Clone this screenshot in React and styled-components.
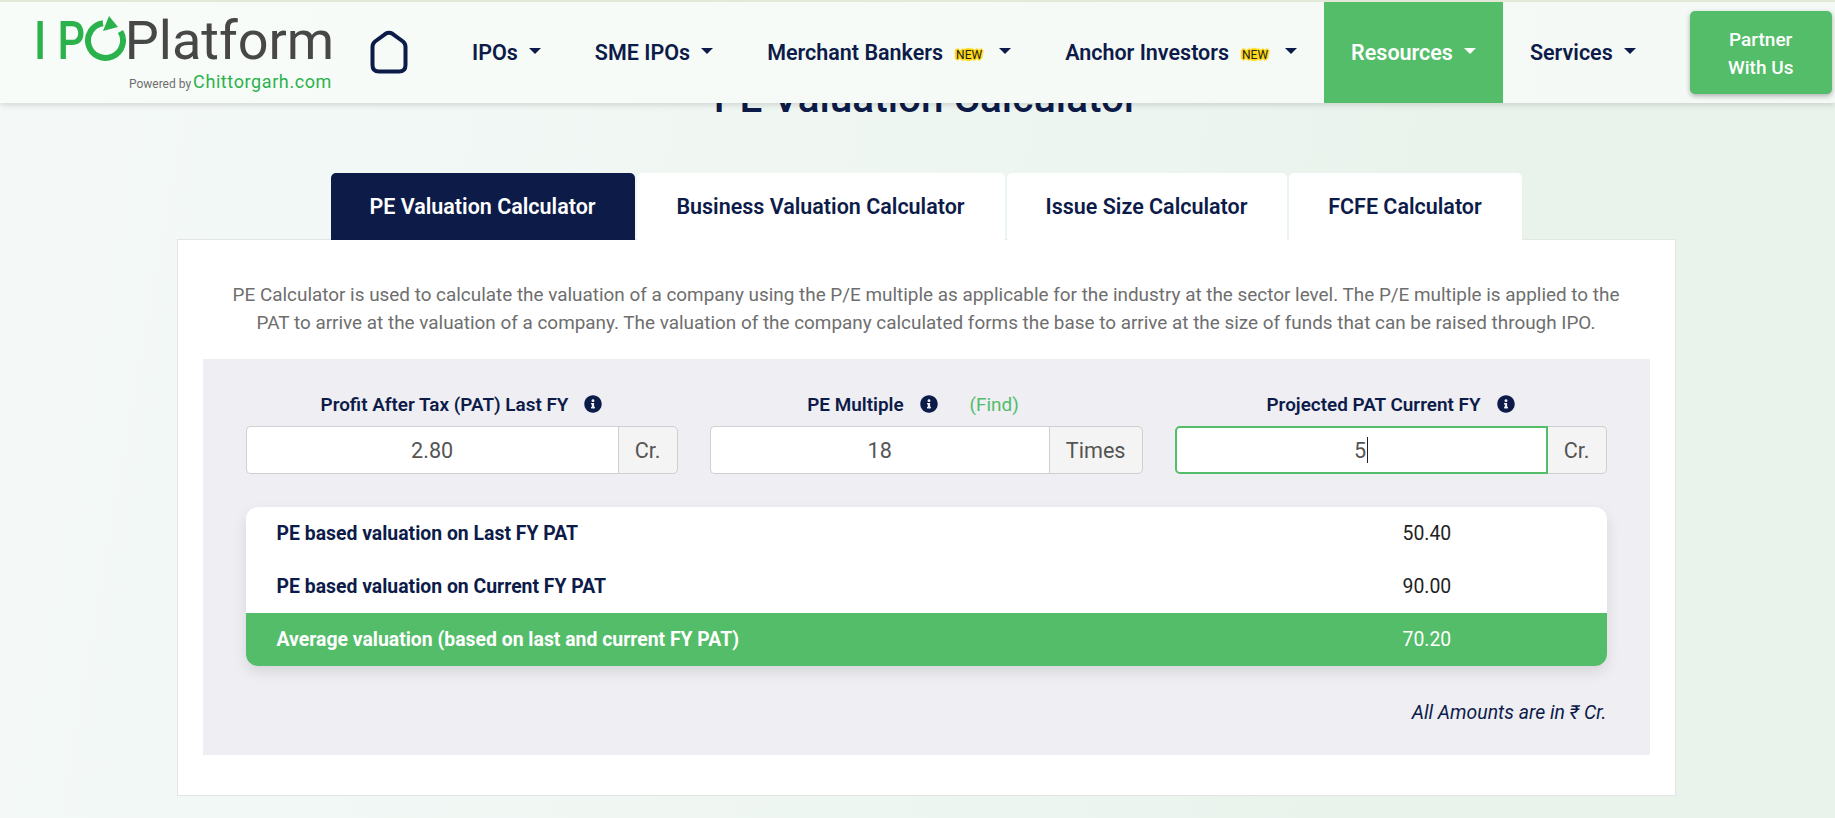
import React from 'react';
import styled, { createGlobalStyle } from 'styled-components';
import { FaInfoCircle } from 'react-icons/fa';

const navy = '#0d1b49';
const green = '#53bd69';
const logoGreen = '#2bb24c';

const GlobalStyle = createGlobalStyle`
  html, body {
    margin: 0;
    height: 818px;
    overflow: hidden;
  }
  body {
    font-family: Roboto, "Liberation Sans", sans-serif;
    color: ${navy};
  }
  * {
    box-sizing: border-box;
  }
`;

const Page = styled.div`
  position: relative;
  height: 818px;
  overflow: hidden;
  background: linear-gradient(100deg, #f4f9f7 0%, #f0f7f3 40%, #e9f3ec 75%);
`;

const Header = styled.header`
  position: absolute;
  top: 0;
  left: 0;
  right: 0;
  height: 103px;
  display: flex;
  align-items: stretch;
  border-top: 2px solid #e4e8d9;
  background: linear-gradient(90deg, #f8fcf9, #f4f9f6);
  box-shadow: 0 2px 6px rgba(0, 0, 0, 0.14);
`;

const LogoLink = styled.a`
  flex: 0 0 370px;
  padding: 7px 0 0 34px;
  display: flex;
  flex-direction: column;
`;

const LogoMain = styled.div`
  display: flex;
  align-items: flex-start;
  height: 63px;
  font-size: 54px;
  line-height: 64px;
`;

const LogoGreen = styled.span`
  display: inline-block;
  color: ${logoGreen};
  font-weight: 500;
  letter-spacing: 14px;
  transform: scaleX(0.8);
  transform-origin: left center;
`;

const LogoDark = styled.span`
  color: #474747;
  font-weight: 400;
`;

const LogoSub = styled.div`
  display: flex;
  justify-content: flex-end;
  align-items: baseline;
  gap: 2px;
  width: 298px;
  line-height: 20px;
`;

const Powered = styled.span`
  font-size: 12px;
  color: #6d6d6d;
`;

const Chittorgarh = styled.span`
  font-size: 18px;
  color: ${logoGreen};
  letter-spacing: 0.6px;
`;

const Ring = styled.svg`
  flex: 0 0 43px;
  margin: 7px -2px 0 -28px;
`;

const HomeLink = styled.a`
  flex: 0 0 75px;
  display: flex;
  align-items: center;
  padding-bottom: 1px;
`;

const NavItem = styled.a`
  display: flex;
  align-items: center;
  padding: 0 27px;
  font-size: 21.5px;
  font-weight: 600;
  white-space: nowrap;
  color: ${p => (p.$active ? '#fff' : navy)};
  background: ${p => (p.$active ? green : 'transparent')};
`;

const Caret = styled.i`
  display: inline-block;
  margin-left: ${p => p.$gap || 11}px;
  margin-bottom: 3px;
  border-top: 6px solid currentColor;
  border-left: 6px solid transparent;
  border-right: 6px solid transparent;
`;

const NewBadge = styled.span`
  margin-left: 11px;
  margin-top: 5px;
  padding: 0 2px;
  font-size: 12px;
  font-weight: 400;
  line-height: 13px;
  color: #222;
  text-shadow: 1px 0 #ffd713, -1px 0 #ffd713, 0 1px #ffd713, 0 -1px #ffd713, 1px 1px #ffd713, -1px -1px #ffd713,
    1px -1px #ffd713, -1px 1px #ffd713, 2px 0 1px #ffd713, -2px 0 1px #ffd713, 0 2px 1px #ffd713, 0 -2px 1px #ffd713;
`;

const PartnerButton = styled.a`
  align-self: flex-start;
  flex: 0 0 142px;
  height: 83px;
  margin: 9px 0 0 27px;
  padding-top: 2px;
  display: flex;
  align-items: center;
  justify-content: center;
  text-align: center;
  border-radius: 5px;
  background: ${green};
  color: #fff;
  font-size: 19px;
  font-weight: 500;
  line-height: 28px;
  box-shadow: 0 2px 5px rgba(0, 0, 0, 0.3);
`;

const Main = styled.main`
  display: flex;
  flex-direction: column;
  align-items: center;
  padding: 74px 0 0 17px;
`;

const Title = styled.h1`
  margin: 0 0 50px;
  font-size: 40.5px;
  font-weight: 500;
  line-height: 49px;
`;

const Tabs = styled.div`
  display: flex;
  gap: 2px;
  height: 67px;
  margin-bottom: -1px;
  position: relative;
`;

const Tab = styled.a`
  display: flex;
  align-items: center;
  justify-content: center;
  width: ${p => p.$width}px;
  padding-bottom: 1px;
  border-radius: 5px 5px 0 0;
  font-size: 21.5px;
  font-weight: 600;
  background: ${p => (p.$active ? navy : '#fff')};
  color: ${p => (p.$active ? '#fff' : navy)};
`;

const Card = styled.section`
  width: 1499px;
  padding: 41px 25px 40px;
  background: #fff;
  border: 1px solid #e3e6e4;
`;

const Intro = styled.p`
  margin: 0 0 22px;
  padding: 0 20px;
  text-align: center;
  font-size: 18.9px;
  line-height: 28px;
  color: #6e6e6e;
`;

const Panel = styled.div`
  padding: 34px 43px 0;
  height: 396px;
  background: #eeeef3;
`;

const Fields = styled.div`
  display: grid;
  grid-template-columns: 432px 433px 432px;
  gap: 32px;
`;

const Label = styled.div`
  display: flex;
  align-items: center;
  justify-content: center;
  height: 22px;
  margin-bottom: 11px;
  padding-right: ${p => (p.$shifted ? 26 : 0)}px;
  font-size: 18.9px;
  font-weight: 600;
  white-space: nowrap;

  svg {
    margin-left: 16px;
    font-size: 18px;
  }
`;

const FindLink = styled.a`
  margin-left: 32px;
  font-weight: 400;
  color: ${green};
`;

const InputGroup = styled.div`
  display: flex;
  height: 48px;
`;

const InputBox = styled.div`
  flex: 1 1 auto;
  display: flex;
  align-items: center;
  justify-content: center;
  background: #fff;
  border: ${p => (p.$focus ? `2px solid ${green}` : '1px solid #cfcfcf')};
  border-right-width: ${p => (p.$focus ? 2 : 0)}px;
  border-radius: 5px 0 0 5px;
  font-size: 21.6px;
  color: #555;
`;

const TextCursor = styled.i`
  width: 1px;
  height: 26px;
  margin-left: 1px;
  background: #222;
`;

const Addon = styled.div`
  display: flex;
  align-items: center;
  padding: 0 16px;
  background: #f4f4f4;
  border: 1px solid #cfcfcf;
  border-left-width: ${p => (p.$noLeft ? 0 : 1)}px;
  border-radius: 0 5px 5px 0;
  font-size: 21.6px;
  color: #555;
`;

const Results = styled.div`
  margin-top: 33px;
  background: #fff;
  border-radius: 12px;
  overflow: hidden;
  box-shadow: 0 6px 14px rgba(0, 0, 0, 0.1);
`;

const Row = styled.div`
  display: grid;
  grid-template-columns: 1126px 1fr;
  align-items: center;
  height: 53px;
  padding-left: 31px;
  font-size: 19.4px;
  color: ${p => (p.$total ? '#fff' : '#222')};
  background: ${p => (p.$total ? green : 'transparent')};
`;

const RowLabel = styled.div`
  font-weight: 700;
  color: ${p => (p.$total ? '#fff' : navy)};
`;

const Note = styled.div`
  margin-top: 35px;
  text-align: right;
  font-size: 19.4px;
  font-style: italic;
  line-height: 24px;
`;

const HomeIcon = () => (
  <svg width="38" height="44" viewBox="0 0 38 44" fill="none">
    <path
      d="M15.5 3.8 Q19 1.6 22.5 3.8 L33 11.5 Q35.5 13.5 35.5 17 V35 Q35.5 41.5 29 41.5 H9 Q2.5 41.5 2.5 35 V17 Q2.5 13.5 5 11.5 Z"
      stroke={navy}
      strokeWidth="4"
      strokeLinejoin="round"
    />
  </svg>
);

const LogoRing = () => (
  <Ring width="43" height="46" viewBox="0 0 43 46">
    <path d="M36.5 15.5 A 17.5 17.5 0 1 1 19 7.2" fill="none" stroke={logoGreen} strokeWidth="6" />
    <path d="M25 0 L34 11 L19 15 Z" fill={logoGreen} />
  </Ring>
);

const tabs = [
  { label: 'PE Valuation Calculator', width: 304, active: true },
  { label: 'Business Valuation Calculator', width: 368 },
  { label: 'Issue Size Calculator', width: 280 },
  { label: 'FCFE Calculator', width: 233 },
];

const rows = [
  { label: 'PE based valuation on Last FY PAT', value: '50.40' },
  { label: 'PE based valuation on Current FY PAT', value: '90.00' },
  { label: 'Average valuation (based on last and current FY PAT)', value: '70.20', total: true },
];

export default function App() {
  return (
    <Page>
      <GlobalStyle />
      <Main>
        <Title>PE Valuation Calculator</Title>
        <Tabs>
          {tabs.map(tab => (
            <Tab key={tab.label} $width={tab.width} $active={tab.active}>
              {tab.label}
            </Tab>
          ))}
        </Tabs>
        <Card>
          <Intro>
            PE Calculator is used to calculate the valuation of a company using the P/E multiple as applicable for the
            industry at the sector level. The P/E multiple is applied to the PAT to arrive at the valuation of a
            company. The valuation of the company calculated forms the base to arrive at the size of funds that can be
            raised through IPO.
          </Intro>
          <Panel>
            <Fields>
              <div>
                <Label>
                  Profit After Tax (PAT) Last FY <FaInfoCircle />
                </Label>
                <InputGroup>
                  <InputBox>2.80</InputBox>
                  <Addon>Cr.</Addon>
                </InputGroup>
              </div>
              <div>
                <Label $shifted>
                  PE Multiple <FaInfoCircle />
                  <FindLink>(Find)</FindLink>
                </Label>
                <InputGroup>
                  <InputBox>18</InputBox>
                  <Addon>Times</Addon>
                </InputGroup>
              </div>
              <div>
                <Label>
                  Projected PAT Current FY <FaInfoCircle />
                </Label>
                <InputGroup>
                  <InputBox $focus>
                    5<TextCursor />
                  </InputBox>
                  <Addon $noLeft>Cr.</Addon>
                </InputGroup>
              </div>
            </Fields>
            <Results>
              {rows.map(row => (
                <Row key={row.label} $total={row.total}>
                  <RowLabel $total={row.total}>{row.label}</RowLabel>
                  <div>{row.value}</div>
                </Row>
              ))}
            </Results>
            <Note>All Amounts are in ₹ Cr.</Note>
          </Panel>
        </Card>
      </Main>
      <Header>
        <LogoLink>
          <LogoMain>
            <LogoGreen>IP</LogoGreen>
            <LogoRing />
            <LogoDark>Platform</LogoDark>
          </LogoMain>
          <LogoSub>
            <Powered>Powered by</Powered>
            <Chittorgarh>Chittorgarh.com</Chittorgarh>
          </LogoSub>
        </LogoLink>
        <HomeLink>
          <HomeIcon />
        </HomeLink>
        <NavItem>
          IPOs
          <Caret />
        </NavItem>
        <NavItem>
          SME IPOs
          <Caret />
        </NavItem>
        <NavItem>
          Merchant Bankers
          <NewBadge>NEW</NewBadge>
          <Caret $gap={15} />
        </NavItem>
        <NavItem>
          Anchor Investors
          <NewBadge>NEW</NewBadge>
          <Caret $gap={15} />
        </NavItem>
        <NavItem $active>
          Resources
          <Caret />
        </NavItem>
        <NavItem>
          Services
          <Caret />
        </NavItem>
        <PartnerButton>
          Partner
          <br />
          With Us
        </PartnerButton>
      </Header>
    </Page>
  );
}
